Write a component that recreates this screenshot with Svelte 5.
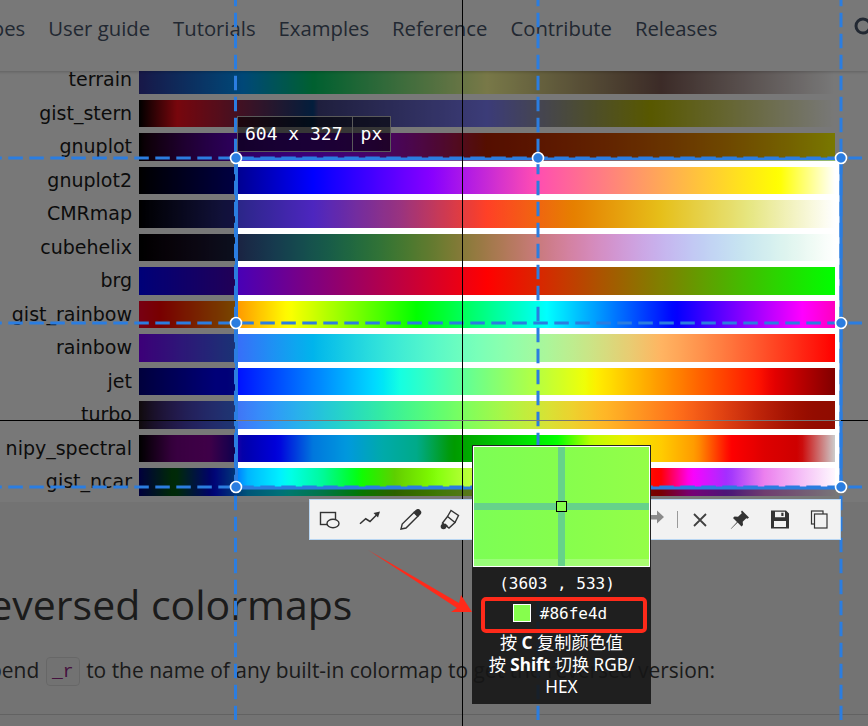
<script>
  // colormap definitions, same tables matplotlib uses
  const lerp = (pts, x) => {
    for (let i = 1; i < pts.length; i++) {
      if (x <= pts[i][0]) {
        const [a, va] = pts[i - 1];
        const [b, vb] = pts[i];
        return b === a ? vb : va + ((vb - va) * (x - a)) / (b - a);
      }
    }
    return pts[pts.length - 1][1];
  };
  const seg = (r, g, b) => (x) => [lerp(r, x), lerp(g, x), lerp(b, x)];
  const even = (vals) => vals.map((v, i) => [i / (vals.length - 1), v]);
  const step = (vals) => vals.map((v, i) => [i * 0.05, v]);

  const helix = (x) => {
    const phi = 2 * Math.PI * (0.5 / 3 - 1.5 * x);
    const a = (x * (1 - x)) / 2;
    const c = (p, q) => x + a * (p * Math.cos(phi) + q * Math.sin(phi));
    return [c(-0.14861, 1.78277), c(-0.29227, -0.90649), c(1.97294, 0)];
  };
  const poly = (k, x) => k.reduceRight((acc, c) => c + x * acc, 0);

  const maps = [
    ["terrain", seg(
      [[0, 0.2], [0.15, 0], [0.25, 0], [0.5, 1], [0.75, 0.5], [1, 1]],
      [[0, 0.2], [0.15, 0.6], [0.25, 0.8], [0.5, 1], [0.75, 0.36], [1, 1]],
      [[0, 0.6], [0.15, 1], [0.25, 0.4], [0.5, 0.6], [0.75, 0.33], [1, 1]])],
    ["gist_stern", seg(
      [[0, 0], [0.0547, 1], [0.25, 0.027], [0.2501, 0.25], [1, 1]],
      [[0, 0], [1, 1]],
      [[0, 0], [0.5, 1], [0.735, 0], [1, 1]])],
    ["gnuplot", (x) => [Math.sqrt(x), x ** 3, Math.sin(2 * Math.PI * x)]],
    ["gnuplot2", (x) => [x / 0.32 - 0.78125, 2 * x - 0.84, x < 0.25 ? 4 * x : x < 0.92 ? -2 * x + 1.84 : x / 0.08 - 11.5]],
    ["CMRmap", seg(
      even([0, 0.15, 0.3, 0.6, 1, 0.9, 0.9, 0.9, 1]),
      even([0, 0.15, 0.15, 0.2, 0.25, 0.5, 0.75, 0.9, 1]),
      even([0, 0.5, 0.75, 0.5, 0.15, 0, 0.1, 0.5, 1]))],
    ["cubehelix", helix],
    ["brg", seg([[0, 0], [0.5, 1], [1, 0]], [[0, 0], [0.5, 0], [1, 1]], [[0, 1], [0.5, 0], [1, 0]])],
    ["gist_rainbow", seg(
      [[0, 1], [0.215, 1], [0.4, 0], [0.586, 0], [0.77, 0], [0.954, 1], [1, 1]],
      [[0, 0], [0.03, 0], [0.215, 1], [0.4, 1], [0.586, 1], [0.77, 0], [1, 0]],
      [[0, 0.16], [0.03, 0], [0.215, 0], [0.4, 0], [0.586, 1], [0.77, 1], [0.954, 1], [1, 0.75]])],
    ["rainbow", (x) => [Math.abs(2 * x - 0.5), Math.sin(Math.PI * x), Math.cos((Math.PI * x) / 2)]],
    ["jet", seg(
      [[0, 0], [0.35, 0], [0.66, 1], [0.89, 1], [1, 0.5]],
      [[0, 0], [0.125, 0], [0.375, 1], [0.64, 1], [0.91, 0], [1, 0]],
      [[0, 0.5], [0.11, 1], [0.34, 1], [0.65, 0], [1, 0]])],
    ["turbo", (x) => [
      poly([0.13572138, 4.6153926, -42.66032258, 132.13108234, -152.94239396, 59.28637943], x),
      poly([0.09140261, 2.19418839, 4.84296658, -14.18503333, 4.27729857, 2.82956604], x),
      poly([0.1066733, 12.64194608, -60.58204836, 110.36276771, -89.90310912, 27.34824973], x)]],
    ["nipy_spectral", seg(
      step([0, 0.4667, 0.5333, 0, 0, 0, 0, 0, 0, 0, 0, 0, 0, 0.7333, 0.9333, 1, 1, 1, 0.8667, 0.8, 0.8]),
      step([0, 0, 0, 0, 0, 0.4667, 0.6, 0.6667, 0.6667, 0.6, 0.7333, 0.8667, 1, 1, 0.9333, 0.8, 0.6, 0, 0, 0, 0.8]),
      step([0, 0.5333, 0.6, 0.6667, 0.8667, 0.8667, 0.8667, 0.6667, 0.5333, 0, 0, 0, 0, 0, 0, 0, 0, 0, 0, 0, 0.8]))],
    ["gist_ncar", seg(
      [[0, 0], [0.3098, 0], [0.3725, 0.3993], [0.4235, 0.5003], [0.5333, 1], [0.7922, 1], [0.8471, 0.6218], [0.898, 0.9235], [1, 0.9961]],
      [[0, 0], [0.051, 0.3722], [0.1059, 0], [0.1569, 0.7202], [0.2157, 1], [0.2588, 0.9804], [0.2706, 0.9804], [0.3176, 1], [0.3686, 0.8081], [0.4275, 1], [0.5216, 1], [0.6314, 0.7292], [0.6863, 0.2796], [0.7451, 0], [0.7922, 0], [0.8431, 0.1753], [0.898, 0.5], [1, 0.9725]],
      [[0, 0.502], [0.051, 0.0222], [0.1098, 1], [0.2039, 1], [0.2627, 0.6145], [0.3216, 0], [0.4157, 0], [0.4745, 0.2342], [0.5333, 0], [0.5804, 0], [0.6314, 0.0549], [0.6902, 0], [0.749, 0], [0.7922, 0.9738], [0.8, 1], [0.8431, 1], [0.898, 0.9341], [1, 0.9961]])],
  ];

  const clamp = (v) => Math.round(Math.min(1, Math.max(0, v)) * 255);
  const gradient = (fn) => {
    const stops = [];
    for (let i = 0; i <= 128; i++) {
      const x = i / 128;
      const [r, g, b] = fn(x);
      stops.push(`rgb(${clamp(r)},${clamp(g)},${clamp(b)}) ${(x * 100).toFixed(2)}%`);
    }
    return `linear-gradient(90deg,${stops.join(",")})`;
  };
  const rows = maps.map(([name, fn]) => ({ name, bg: gradient(fn) }));

  const navItems = ["Plot types", "User guide", "Tutorials", "Examples", "Reference", "Contribute", "Releases"];

  const handles = [[236, 158], [538, 158], [841, 158], [236, 323], [841, 323], [236, 487], [841, 487]];
</script>

<div class="screen">
  <header class="nav">
    {#each navItems as item}
      <span>{item}</span>
    {/each}
    <svg class="search" width="28" height="28" viewBox="0 0 28 28">
      <circle cx="12" cy="12" r="7" fill="none" stroke="#48566b" stroke-width="3" />
    </svg>
  </header>

  <main class="article">
    <div class="cmaps">
      {#each rows as row}
        <div class="label">{row.name}</div>
        <div class="bar" style="background: {row.bg}"></div>
      {/each}
    </div>

    <h2>Reversed colormaps</h2>
    <p>Append <code>_r</code> to the name of any built-in colormap to get the reversed version:</p>
    <hr />
  </main>

  <!-- capture overlay starts here -->
  <div class="hole"></div>

  <svg class="guides" width="868" height="726" viewBox="0 0 868 726">
    <g stroke="#2b7de0" stroke-width="3" fill="none">
      <path d="M0 158H862M0 323H862M0 487H862" stroke-dasharray="14.500 6.500" stroke-dashoffset="12.700" />
      <path d="M235.500 0V720M538 0V720M841 0V720" stroke-dasharray="14.500 6.500" stroke-dashoffset="8.300" />
      <rect x="236.500" y="159" width="604.500" height="329" />
    </g>
    <path d="M0 420.500H236M841 420.500H868M462.500 0V726" stroke="#000" />
    <path d="M236 420.500H841" stroke="#777" />
    {#each handles as [cx, cy]}
      <circle {cx} {cy} r="5.500" fill="#2b7de0" stroke="#fff" stroke-width="1.600" />
    {/each}
  </svg>

  <div class="size-tag"><span>604 x 327</span><span>px</span></div>

  <div class="toolbar">
    <div class="tool">
      <svg width="24" height="24" viewBox="0 0 24 24" fill="none" stroke="#333" stroke-width="1.400">
        <rect x="2.500" y="4.500" width="15" height="12" />
        <ellipse cx="15" cy="15.500" rx="6" ry="4.200" fill="#f2f2f2" />
      </svg>
    </div>
    <div class="tool">
      <svg width="24" height="24" viewBox="0 0 24 24" fill="none" stroke="#333" stroke-width="1.500">
        <path d="M2 15.800 7.700 10.800 12 13.500 18.500 7" />
        <path d="M22 3.500 15.500 5 20 9.500Z" fill="#333" stroke="none" />
      </svg>
    </div>
    <div class="tool">
      <svg width="24" height="24" viewBox="0 0 24 24" fill="none" stroke="#333" stroke-width="1.400">
        <path d="M3 21 4.200 16 16 4.500 19.800 8.300 8 20Z" />
        <path d="M16.500 4 18.500 2.200A2 2 0 0 1 21.500 2.500L22 3A2 2 0 0 1 22 6L20 8Z" fill="#333" />
      </svg>
    </div>
    <div class="tool">
      <svg width="24" height="24" viewBox="0 0 24 24" fill="none" stroke="#333" stroke-width="1.400">
        <path d="M4.500 15 9.500 8.500 17 14.500 11 20Z" />
        <path d="M9.500 8.500 13 2.500 20.500 7.500 17 14.500" />
        <path d="M7 16 9.500 18.500" />
        <circle cx="5.500" cy="18.500" r="2.800" fill="#333" stroke="none" />
      </svg>
    </div>
    <div class="tool-gap"></div>
    <div class="tool redo">
      <svg width="24" height="24" viewBox="0 0 24 24">
        <path d="M0 7H8V2.500L15 9 8 15.500V11.500H0Z" fill="#8a8a8a" />
      </svg>
    </div>
    <i class="sep"></i>
    <div class="tool">
      <svg width="24" height="24" viewBox="0 0 24 24" fill="none" stroke="#404040" stroke-width="1.800">
        <path d="M6 6 18 18M18 6 6 18" />
      </svg>
    </div>
    <div class="tool">
      <svg width="24" height="24" viewBox="0 0 24 24">
        <path d="M14 2.500 21 9.500 19.500 10.800 18.300 10.200 14.700 13.800 15 17 13.500 18.500 9.600 14.600 3 21 2.800 20.800 9 14 5 10 6.500 8.500 10 8.800 13.800 5.200 13 3.700Z" fill="#333" />
      </svg>
    </div>
    <div class="tool">
      <svg width="24" height="24" viewBox="0 0 24 24">
        <path fill-rule="evenodd" d="M3 2.500H18L21 5.500V20.500H3ZM7 3.800V9.300H17V3.800ZM13.300 4.800H15.500V8H13.300ZM6 13V19H18V13Z" fill="#333" />
      </svg>
    </div>
    <div class="tool copy">
      <svg width="24" height="24" viewBox="0 0 24 24" fill="none" stroke="#333" stroke-width="1.200">
        <rect x="4.500" y="3" width="11.500" height="13" />
        <rect x="7.500" y="6" width="12.500" height="14" fill="#f2f2f2" />
      </svg>
    </div>
  </div>

  <svg class="arrow" width="110" height="70" viewBox="0 0 110 70">
    <path d="M0 0 91 53 93 45 104 62 83 62 89 58Z" fill="#ff2a1a" />
  </svg>

  <div class="magnifier">
    <div class="lens">
      <div class="lens-row"></div>
      <div class="lens-h"></div>
      <div class="lens-v"></div>
      <div class="lens-pixel"></div>
    </div>
    <div class="info">
      <div class="coords">(3603 , 533)</div>
      <div class="hex"><i class="swatch"></i><span>#86fe4d</span></div>
      <div class="hint">按 <b>C</b> 复制颜色值<br />按 <b>Shift</b> 切换 RGB/<br />HEX</div>
    </div>
  </div>
</div>

<style>
  :global(body) {
    margin: 0;
    background: #fff;
  }

  .screen {
    position: relative;
    width: 868px;
    height: 726px;
    overflow: hidden;
    background: #f5f5f5;
    font-family: "Open Sans", "Noto Sans", sans-serif;
    color: #222;
  }

  .nav {
    position: relative;
    z-index: 1;
    height: 71px;
    box-sizing: border-box;
    display: flex;
    gap: 23px;
    margin-left: -67.600px;
    padding-top: 13px;
    background: #fff;
    box-shadow: 0 1px 3px rgba(0, 0, 0, 0.2);
    color: #48566b;
    font-size: 20.300px;
    line-height: 30px;
    white-space: nowrap;
  }

  .search {
    margin-left: 111px;
    margin-top: 1px;
    flex: none;
  }

  .article {
    margin-top: -5px;
  }

  .cmaps {
    display: grid;
    grid-template-columns: 132px 696px;
    grid-auto-rows: 33.5px;
    column-gap: 7px;
    background: #fff;
    font-family: "DejaVu Sans", sans-serif;
    font-size: 19px;
    color: #1a1a1a;
  }

  .label {
    text-align: right;
    white-space: nowrap;
    line-height: 27px;
    direction: rtl;
  }

  .bar {
    height: 27.5px;
  }

  h2 {
    margin: 74px 0 0 -36px;
    font-size: 41px;
    line-height: 56px;
    font-weight: 400;
    white-space: nowrap;
    color: #3a3a3a;
  }

  p {
    margin: 23px 0 0 -37px;
    font-size: 20.950px;
    line-height: 30px;
    white-space: nowrap;
    color: #3a3a3a;
  }

  code {
    display: inline-block;
    width: 34px;
    height: 29px;
    margin: 0 1px;
    box-sizing: border-box;
    border: 1px solid #dcdcdc;
    border-radius: 4px;
    background: #f3f3f3;
    color: #912583;
    font-family: "Liberation Mono", monospace;
    font-size: 18px;
    line-height: 28px;
    text-align: center;
    vertical-align: middle;
  }

  hr {
    margin: 28px 0 0;
    border: 0;
    border-top: 1px solid #d0d0d0;
  }

  .hole {
    position: absolute;
    left: 237px;
    top: 160px;
    width: 604px;
    height: 327px;
    z-index: 2;
    box-shadow: 0 0 0 1200px rgba(0, 0, 0, 0.53);
  }

  .guides {
    position: absolute;
    left: 0;
    top: 0;
    z-index: 3;
  }

  .size-tag {
    position: absolute;
    z-index: 4;
    left: 237px;
    top: 116px;
    height: 36px;
    box-sizing: border-box;
    display: flex;
    border: 1px solid #5a5a5a;
    background: rgba(0, 0, 0, 0.55);
    color: #fff;
    font-family: "DejaVu Sans Mono", monospace;
    font-size: 18px;
    line-height: 34px;
  }

  .size-tag span {
    padding: 0 8px;
  }

  .size-tag span:first-child {
    padding: 0 9px 0 7px;
    border-right: 1px solid #5a5a5a;
  }

  .toolbar {
    position: absolute;
    z-index: 4;
    left: 309px;
    top: 499px;
    width: 532px;
    height: 41px;
    box-sizing: border-box;
    display: flex;
    align-items: center;
    border: 1px solid #b9d6f2;
    background: #f2f2f2;
  }

  .tool {
    width: 40px;
    height: 24px;
    display: flex;
    justify-content: center;
    flex: none;
  }

  .tool-gap {
    width: 181px;
  }

  .redo {
    width: 30px;
    margin-left: -5px;
  }

  .copy {
    margin-left: -1px;
  }

  .sep {
    width: 1px;
    height: 17px;
    margin: 0 2px 0 1px;
    background: #9a9a9a;
    flex: none;
  }

  .arrow {
    position: absolute;
    z-index: 4;
    left: 368px;
    top: 550px;
  }

  .magnifier {
    position: absolute;
    z-index: 5;
    left: 472px;
    top: 445px;
    width: 179px;
    height: 259px;
    color: #fff;
  }

  .lens {
    position: relative;
    height: 121px;
    margin: 1px 1px 0;
    box-sizing: border-box;
    border: 1px solid #fff;
    outline: 1px solid #222;
    background: linear-gradient(90deg, #7cfe55, #86fe4d 50%, #94fe48);
    overflow: hidden;
  }

  .lens-row {
    position: absolute;
    left: 0;
    right: 0;
    bottom: 0;
    height: 7px;
    background: rgba(255, 255, 255, 0.22);
  }

  .lens-h {
    position: absolute;
    left: 0;
    right: 0;
    top: 56px;
    height: 7px;
    background: #66d28a;
  }

  .lens-v {
    position: absolute;
    top: 0;
    bottom: 0;
    left: 84px;
    width: 7px;
    background: #66d28a;
  }

  .lens-pixel {
    position: absolute;
    left: 82px;
    top: 54px;
    width: 11px;
    height: 11px;
    box-sizing: border-box;
    border: 1px solid #000;
    background: #86fe4d;
  }

  .info {
    height: 137px;
    box-sizing: border-box;
    padding-top: 7px;
    background: rgba(22, 22, 22, 0.9);
    text-align: center;
  }

  .coords {
    padding-right: 9px;
    font-family: "DejaVu Sans Mono", monospace;
    font-size: 16px;
    line-height: 20px;
  }

  .hex {
    margin: 3px 4px 0 9px;
    height: 36px;
    box-sizing: border-box;
    padding: 0 8px 4px 0;
    border: 4px solid #ff2a1a;
    border-radius: 5px;
    display: flex;
    align-items: center;
    justify-content: center;
    gap: 9px;
    font-family: "DejaVu Sans Mono", monospace;
    font-size: 16px;
  }

  .swatch {
    width: 18px;
    height: 18px;
    box-sizing: border-box;
    border: 1px solid #fff;
    background: #86fe4d;
  }

  .hint {
    margin-top: -1px;
    font-family: "Noto Sans", "Noto Sans CJK SC", sans-serif;
    font-size: 17.200px;
    line-height: 22px;
  }
</style>
